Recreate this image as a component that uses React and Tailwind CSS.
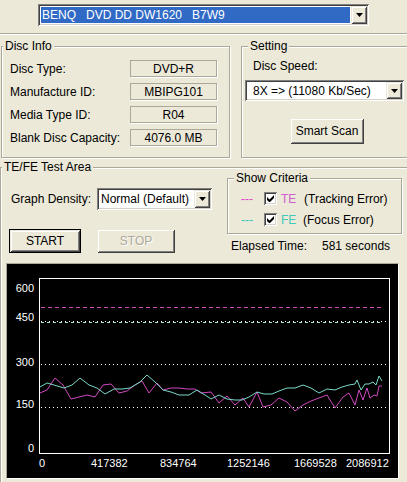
import React from "react";

const raised =
  "shadow-[inset_1px_1px_#ece9d8,inset_-1px_-1px_#404040,inset_2px_2px_#fff,inset_-2px_-2px_#808080]";
const sunken =
  "shadow-[inset_1px_1px_#808080,inset_-1px_-1px_#fff,inset_2px_2px_#404040,inset_-2px_-2px_#d4d0c8]";
const etched = "border border-[#aca899] shadow-[1px_1px_0_#fff,inset_1px_1px_0_#fff]";

function ArrowBtn() {
  return (
    <div className={`w-[16px] shrink-0 flex items-center justify-center bg-[#ece9d8] ${raised}`}>
      <svg width="7" height="4" viewBox="0 0 7 4">
        <path d="M0 0h7L3.5 4z" fill="#000" />
      </svg>
    </div>
  );
}

function Combo({ className, text, textClass }) {
  return (
    <div className={`flex shrink-0 p-[2px] bg-white ${sunken} ${className}`}>
      <div className={`flex-1 flex items-center whitespace-pre ${textClass}`}>{text}</div>
      <ArrowBtn />
    </div>
  );
}

function Group({ className, title, titleClass, children }) {
  return (
    <div className={`relative shrink-0 ${etched} ${className}`}>
      <span className={`absolute -top-[8px] px-[2px] leading-[14px] bg-[#ece9d8] whitespace-nowrap ${titleClass}`}>
        {title}
      </span>
      {children}
    </div>
  );
}

function Check() {
  return (
    <div className={`w-[13px] h-[13px] shrink-0 bg-white ${sunken} flex items-center justify-center`}>
      <svg width="7" height="7" viewBox="0 0 7 7">
        <path d="M0 2v3l2 2h1l4-4V0L2.5 4.5z" fill="#000" />
      </svg>
    </div>
  );
}

const fe = [
  [41, 387], [48, 383], [55, 385], [65, 388], [73, 385], [81, 378], [90, 385], [98, 388], [106, 394],
  [115, 389], [123, 389], [131, 388], [141, 382], [148, 375], [156, 382], [164, 390], [172, 392],
  [180, 395], [190, 395], [198, 390], [206, 395], [212, 399], [220, 395], [228, 399], [236, 400],
  [243, 400], [250, 397], [258, 392], [265, 394], [273, 394], [280, 391], [288, 388], [296, 388],
  [304, 385], [312, 388], [320, 393], [328, 389], [336, 390], [343, 387], [350, 385], [356, 384],
  [358, 380], [362, 390], [366, 384], [370, 384], [374, 382], [377, 385], [380, 376], [383, 381],
];
const te = [
  [41, 393], [48, 390], [56, 378], [64, 385], [72, 399], [80, 397], [88, 395], [96, 397], [104, 385],
  [112, 384], [120, 393], [128, 391], [136, 385], [143, 381], [150, 393], [158, 383], [164, 390],
  [172, 388], [180, 388], [188, 389], [196, 389], [202, 393], [212, 392], [220, 403], [228, 396],
  [236, 405], [244, 398], [250, 407], [258, 392], [264, 407], [272, 405], [280, 398], [288, 402],
  [296, 411], [304, 405], [312, 401], [320, 398], [328, 395], [336, 408], [344, 397], [350, 393],
  [356, 405], [360, 390], [364, 400], [368, 388], [371, 398], [375, 395], [378, 396], [380, 386],
  [383, 386],
];
const pts = (a) => a.map((p) => p.join(",")).join(" ");

function Chart() {
  const f = { fontFamily: "Liberation Sans, Arial, sans-serif", fontSize: 11, fill: "#fff" };
  return (
    <div className="ml-[5px] mt-[10px] w-[393px] h-[216px] border border-t-[#aca899] border-l-[#aca899] border-r-white border-b-white bg-black">
      <svg width="391" height="214" viewBox="8 264 391 214" className="block">
        <rect x="8" y="264" width="391" height="214" fill="#000" />
        <rect x="40.5" y="278.5" width="350" height="175" fill="none" stroke="#fff" />
        <line x1="42" x2="384" y1="307.5" y2="307.5" stroke="#d050b8" strokeDasharray="4 3" />
        <line x1="42" x2="388" y1="321.5" y2="321.5" stroke="#fff" strokeDasharray="1 3" />
        <line x1="42" x2="384" y1="322.5" y2="322.5" stroke="#a8e0d8" strokeDasharray="3 3" />
        <line x1="42" x2="388" y1="364.5" y2="364.5" stroke="#fff" strokeDasharray="1 3" />
        <line x1="42" x2="388" y1="407.5" y2="407.5" stroke="#fff" strokeDasharray="1 3" />
        <polyline points={pts(te)} fill="none" stroke="#d048c0" strokeWidth="1" />
        <polyline points={pts(fe)} fill="none" stroke="#78d8c8" strokeWidth="1" />
        <g style={f} textAnchor="end">
          <text x="35" y="292">600</text>
          <text x="35" y="321">450</text>
          <text x="35" y="366">300</text>
          <text x="35" y="408">150</text>
          <text x="35" y="452">0</text>
        </g>
        <g style={f}>
          <text x="40" y="467">0</text>
          <text x="92" y="467">417382</text>
          <text x="161" y="467">834764</text>
          <text x="228" y="467">1252146</text>
          <text x="295" y="467">1669528</text>
          <text x="347" y="467">2086912</text>
        </g>
      </svg>
    </div>
  );
}

export default function App() {
  const rows = [
    ["Disc Type:", "DVD+R"],
    ["Manufacture ID:", "MBIPG101"],
    ["Media Type ID:", "R04"],
    ["Blank Disc Capacity:", "4076.0 MB"],
  ];
  return (
    <div className="w-[407px] h-[482px] overflow-hidden bg-[#ece9d8] text-black text-[12px] leading-[14px] font-['Liberation_Sans',Arial,sans-serif]">
      <div className="h-[33px] pt-[4px] pl-[38px]">
        <Combo
          className="w-[331px] h-[22px]"
          text={"BENQ   DVD DD DW1620   B7W9"}
          textClass="m-[1px] pl-[1px] bg-[#316ac5] text-white"
        />
      </div>
      <div className="h-[2px] border-t border-t-[#aca899] border-b border-b-white" />

      <div className="flex mt-[11px] h-[112px]">
        <Group className="ml-[1px] w-[229px] h-[112px]" title="Disc Info" titleClass="left-[1px] px-[1px]">
          <div className="flex flex-col gap-[6px] pt-[13px] pl-[8px]">
            {rows.map(([l, v]) => (
              <div key={l} className="flex items-center h-[17px]">
                <div className="w-[120px] shrink-0">{l}</div>
                <div className="w-[87px] h-[17px] shrink-0 flex items-center justify-center border border-[#aca899] shadow-[1px_1px_0_#fff]">
                  {v}
                </div>
              </div>
            ))}
          </div>
        </Group>
        <Group className="ml-[11px] w-[175px] h-[112px]" title="Setting" titleClass="left-[6px]">
          <div className="pt-[12px] pl-[11px]">Disc Speed:</div>
          <Combo
            className="ml-[3px] mt-[7px] w-[159px] h-[21px]"
            text="8X => (11080 Kb/Sec)"
            textClass="pl-[6px]"
          />
          <div
            className={`ml-[48px] mt-[17px] w-[74px] h-[26px] flex items-center justify-center ${raised}`}
          >
            Smart Scan
          </div>
        </Group>
      </div>

      <Group className="mt-[9px] w-[420px] h-[340px]" title="TE/FE Test Area" titleClass="left-[1px] px-[1px]">
        <div className="flex h-[85px]">
          <div className="w-[226px] shrink-0 flex flex-col">
            <div className="flex items-center mt-[20px] h-[22px]">
              <div className="ml-[10px] w-[86px] shrink-0">Graph Density:</div>
              <Combo className="w-[115px] h-[22px]" text="Normal (Default)" textClass="pl-[2px]" />
            </div>
            <div className="flex mt-[19px] ml-[8px] gap-[16px]">
              <div className="w-[72px] h-[24px] shrink-0 border border-black">
                <div className={`w-full h-full flex items-center justify-center ${raised}`}>START</div>
              </div>
              <div
                className={`w-[78px] h-[24px] shrink-0 flex items-center justify-center text-[#aca899] [text-shadow:1px_1px_0_#fff] ${raised}`}
              >
                STOP
              </div>
            </div>
          </div>
          <div className="flex flex-col shrink-0">
            <Group className="mt-[10px] w-[175px] h-[56px]" title="Show Criteria" titleClass="left-[6px]">
              <div className="pt-[9px] pl-[13px] flex flex-col">
                <div className="flex items-center h-[21px]">
                  <span className="w-[23px] text-[#e040c8]">---</span>
                  <Check />
                  <span className="ml-[4px] w-[23px] text-[#d060d0]">TE</span>
                  <span>(Tracking Error)</span>
                </div>
                <div className="flex items-center h-[21px]">
                  <span className="w-[23px] text-[#30c8b8]">---</span>
                  <Check />
                  <span className="ml-[4px] w-[22px] text-[#40c8b8]">FE</span>
                  <span>(Focus Error)</span>
                </div>
              </div>
            </Group>
            <div className="mt-[5px] ml-[4px] flex">
              <span className="w-[91px]">Elapsed Time:</span>
              <span>581 seconds</span>
            </div>
          </div>
        </div>
        <Chart />
      </Group>
    </div>
  );
}
